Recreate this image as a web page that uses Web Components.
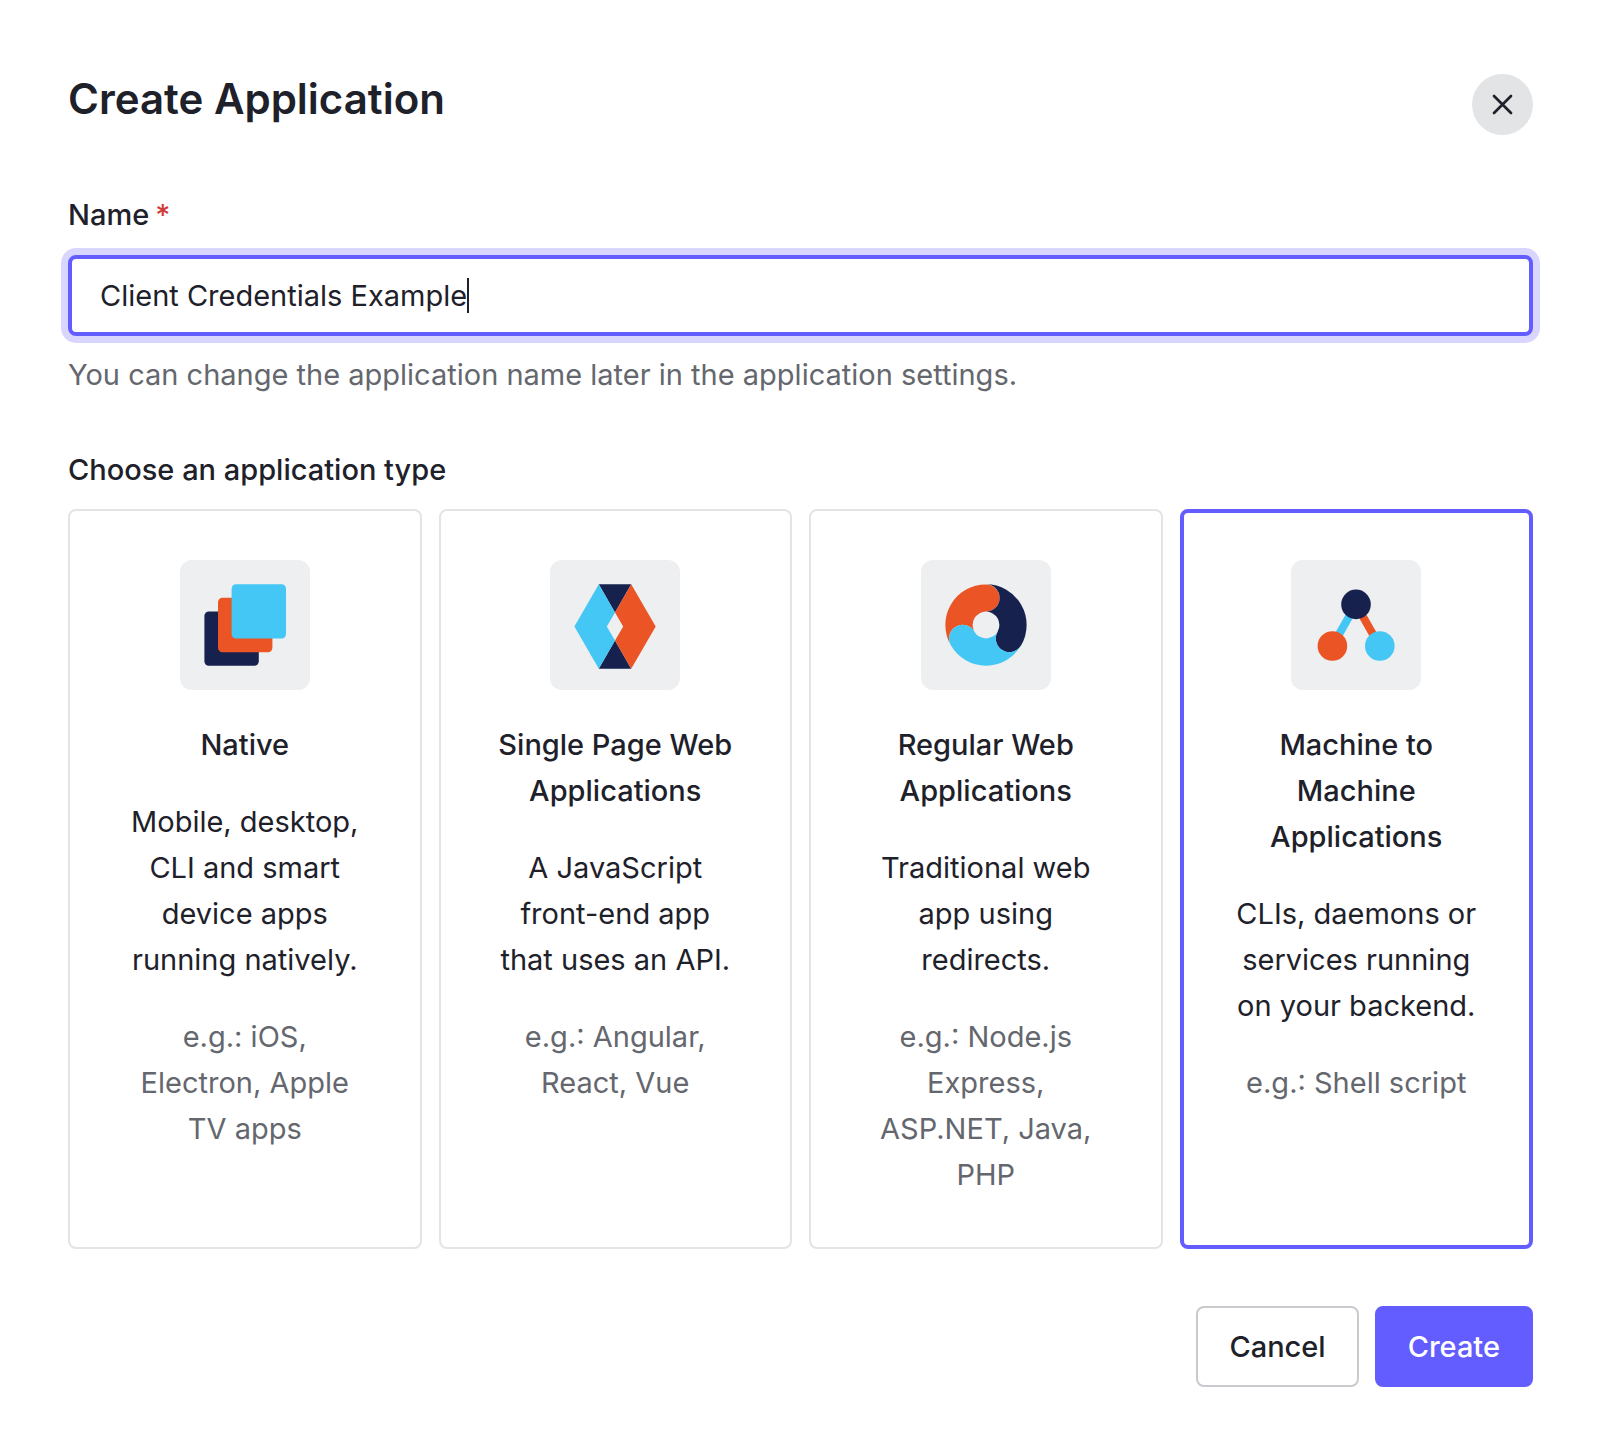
<!DOCTYPE html>
<html lang="en">
<head>
<meta charset="utf-8">
<meta name="viewport" content="width=device-width, initial-scale=1">
<title>Create Application</title>
<style>
  :root {
    --ink: #1e212a;
    --muted: #65676e;
    --primary: #635dff;
    --ring: #d8d6ff;
    --line: #e3e4e6;
    --tile: #eeeff1;
  }
  body {
    margin: 0;
    background: #fff;
    color: var(--ink);
    font: 400 29px/46px Inter, sans-serif;
    font-optical-sizing: none;
  }
</style>
</head>
<body>
<create-application-dialog></create-application-dialog>

<template id="dialog-template">
  <style>
    :host { display: block; padding: 74px 73px 64px 68px; }
    header { display: flex; justify-content: space-between; align-items: flex-start; margin-bottom: 57px; }
    h1 { margin: 0; font-size: 42px; line-height: 50px; font-weight: 600; }
    .close {
      width: 61px; height: 61px; padding: 0; border: 0; border-radius: 50%;
      display: grid; place-items: center; background: #e3e4e6; color: var(--ink); cursor: pointer;
    }
    fieldset { border: 0; margin: 0; padding: 0; min-width: 0; }
    legend { padding: 0; font-weight: 500; margin-bottom: 16px; }
    .types { display: grid; grid-template-columns: repeat(4, minmax(0, 1fr)); gap: 17px; }
    footer { display: flex; justify-content: flex-end; gap: 16px; margin-top: 57px; }
  </style>
  <form>
    <header>
      <h1>Create Application</h1>
      <button class="close" type="button" aria-label="Close">
        <svg width="21" height="21" viewBox="0 0 21 21" fill="none" stroke="currentColor" stroke-width="2.7" stroke-linecap="round"><path d="M2 2 19 19M19 2 2 19"/></svg>
      </button>
    </header>
    <name-field value="Client Credentials Example">
      <span slot="label">Name</span>
      <span slot="hint">You can change the application name later in the application settings.</span>
    </name-field>
    <fieldset>
      <legend>Choose an application type</legend>
      <div class="types">
        <app-type-card value="native">
          <app-type-icon slot="icon" name="native"></app-type-icon>
          <span slot="title">Native</span>
          <span slot="description">Mobile, desktop, CLI and smart device apps running natively.</span>
          <span slot="example">e.g.: iOS, Electron, Apple TV apps</span>
        </app-type-card>
        <app-type-card value="spa">
          <app-type-icon slot="icon" name="spa"></app-type-icon>
          <span slot="title">Single Page Web Applications</span>
          <span slot="description">A JavaScript front-end app that uses an API.</span>
          <span slot="example">e.g.: Angular, React, Vue</span>
        </app-type-card>
        <app-type-card value="regular">
          <app-type-icon slot="icon" name="regular"></app-type-icon>
          <span slot="title">Regular Web Applications</span>
          <span slot="description">Traditional web app using redirects.</span>
          <span slot="example">e.g.: Node.js Express, ASP.NET, Java, PHP</span>
        </app-type-card>
        <app-type-card value="m2m" checked>
          <app-type-icon slot="icon" name="m2m"></app-type-icon>
          <span slot="title">Machine to Machine Applications</span>
          <span slot="description">CLIs, daemons or services running on your backend.</span>
          <span slot="example">e.g.: Shell script</span>
        </app-type-card>
      </div>
    </fieldset>
    <footer>
      <action-button>Cancel</action-button>
      <action-button variant="primary">Create</action-button>
    </footer>
  </form>
</template>

<template id="name-field-template">
  <style>
    :host { display: block; margin-bottom: 49px; }
    label { display: flex; gap: 6px; font-weight: 500; margin-bottom: 17px; }
    .required { color: #d03c38; }
    .box {
      display: flex; align-items: center; height: 81px; box-sizing: border-box;
      padding: 0 28px; border: 4px solid var(--primary); border-radius: 8px;
      background: #fff; box-shadow: 0 0 0 7px var(--ring);
    }
    input {
      field-sizing: content; min-width: 0; padding: 0; border: 0; outline: 0; background: none;
      color: inherit; font: inherit; font-optical-sizing: inherit; caret-color: transparent;
    }
    .caret { flex: none; width: 2px; height: 35px; background: var(--ink); }
    .hint { margin: 16px 0 0; color: var(--muted); }
  </style>
  <label for="name"><slot name="label"></slot><span class="required">*</span></label>
  <div class="box"><input id="name" type="text" required aria-describedby="hint"><span class="caret"></span></div>
  <p class="hint" id="hint"><slot name="hint"></slot></p>
</template>

<template id="card-template">
  <style>
    :host { display: block; }
    label {
      display: flex; flex-direction: column; align-items: center; box-sizing: border-box; height: 100%;
      padding: 49px 51px; border: 2px solid var(--line); border-radius: 8px;
      text-align: center; cursor: pointer; position: relative;
    }
    :host([checked]) label { padding: 47px 49px; border: 4px solid var(--primary); }
    input { position: absolute; opacity: 0; width: 1px; height: 1px; margin: 0; }
    .title { margin-top: 32px; font-weight: 500; }
    .description { margin-top: 31px; }
    .example { margin-top: 31px; color: var(--muted); }
  </style>
  <label>
    <input type="radio" name="app-type">
    <slot name="icon"></slot>
    <span class="title"><slot name="title"></slot></span>
    <span class="description"><slot name="description"></slot></span>
    <span class="example"><slot name="example"></slot></span>
  </label>
</template>

<template id="button-template">
  <style>
    :host { display: block; }
    button {
      height: 81px; padding: 0 31px; border: 2px solid #c9cace; border-radius: 8px;
      background: #fff; color: var(--ink); font: inherit; font-optical-sizing: inherit; font-weight: 500; cursor: pointer;
    }
    :host([variant="primary"]) button { border-color: var(--primary); background: var(--primary); color: #fff; }
  </style>
  <button type="button"><slot></slot></button>
</template>

<script>
  const stamp = (host, id) => {
    const root = host.attachShadow({ mode: "open" });
    root.append(document.getElementById(id).content.cloneNode(true));
    return root;
  };

  const artwork = {
    native: `
      <rect x="24.4" y="51.4" width="54.4" height="54.4" rx="4.5" fill="#16214d"/>
      <rect x="38" y="37.8" width="54.4" height="54.4" rx="4.5" fill="#eb5424"/>
      <rect x="51.6" y="24.2" width="54.4" height="54.4" rx="4.5" fill="#44c7f4"/>`,
    spa: `
      <path fill="#16214d" d="M48.8 24.3H81.2L65 52.4ZM48.8 108.7H81.2L65 80.4Z"/>
      <path fill="#44c7f4" d="M48.8 24.3 24.4 66.5 48.8 108.7 65 80.6 56.8 66.5 65 52.4Z"/>
      <path fill="#eb5424" d="M81.2 24.3 105.7 66.5 81.2 108.7 65 80.6 73.2 66.5 65 52.4Z"/>`,
    regular: ["#eb5424", "#16214d", "#44c7f4"].map((fill, i) => `
      <path fill="${fill}" transform="rotate(${i * 120} 65 65)" d="M29.8 85.3A40.6 40.6 0 0 1 65 24.4A13.6 13.6 0 0 1 65 51.6A13.4 13.4 0 0 0 53.4 71.7A13.6 13.6 0 0 0 29.8 85.3Z"/>`).join(""),
    m2m: `
      <path stroke="#44c7f4" stroke-width="8" d="M65 44.4 41.4 86"/>
      <path stroke="#eb5424" stroke-width="8" d="M65 44.4 88.6 86"/>
      <circle cx="65" cy="44.4" r="14.8" fill="#16214d"/>
      <circle cx="41.4" cy="86" r="14.8" fill="#eb5424"/>
      <circle cx="88.8" cy="86" r="14.8" fill="#44c7f4"/>`
  };

  customElements.define("app-type-icon", class extends HTMLElement {
    connectedCallback() {
      if (this.shadowRoot) return;
      this.attachShadow({ mode: "open" }).innerHTML = `
        <style>
          :host { display: block; flex: none; width: 130px; height: 130px; border-radius: 12px; background: var(--tile); }
          svg { display: block; }
        </style>
        <svg width="130" height="130" viewBox="0 0 130 130" aria-hidden="true">${artwork[this.getAttribute("name")]}</svg>`;
    }
  });

  customElements.define("action-button", class extends HTMLElement {
    constructor() { super(); stamp(this, "button-template"); }
  });

  customElements.define("name-field", class extends HTMLElement {
    connectedCallback() {
      if (this.shadowRoot) return;
      stamp(this, "name-field-template").querySelector("input").value = this.getAttribute("value") || "";
    }
  });

  customElements.define("app-type-card", class extends HTMLElement {
    connectedCallback() {
      if (this.shadowRoot) return;
      const input = stamp(this, "card-template").querySelector("input");
      input.value = this.getAttribute("value");
      input.checked = this.hasAttribute("checked");
      input.addEventListener("change", () => {
        for (const card of this.parentElement.children) {
          card.toggleAttribute("checked", card === this);
          card.shadowRoot.querySelector("input").checked = card === this;
        }
      });
    }
  });

  customElements.define("create-application-dialog", class extends HTMLElement {
    constructor() { super(); stamp(this, "dialog-template"); }
  });
</script>
</body>
</html>
